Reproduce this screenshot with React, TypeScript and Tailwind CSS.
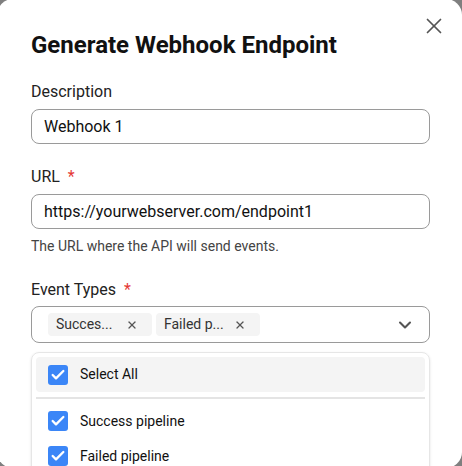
import { X, ChevronDown, Check } from 'lucide-react'

const font = { fontFamily: 'Roboto, "Liberation Sans", sans-serif' }

function Checkbox() {
  return (
    <span className="flex h-5 w-5 shrink-0 items-center justify-center rounded-[3px] bg-[#3b86f7]">
      <Check className="h-4 w-4 text-white" strokeWidth={3.5} />
    </span>
  )
}

function Chip({ label }: { label: string }) {
  return (
    <span className="flex h-[23px] w-[104px] items-center justify-between rounded-[4px] bg-[#f4f4f4] pl-2 pr-[14px] text-[14px] text-[#333]">
      <span>{label}</span>
      <X className="h-3 w-3 text-[#555]" strokeWidth={2.5} />
    </span>
  )
}

export default function App() {
  return (
    <div className="h-[466px] w-[462px] overflow-hidden bg-[#7f7f7f]" style={font}>
      <div className="-ml-[3px] -mt-[1px] h-[469px] w-[465px] rounded-2xl bg-white pl-[34px] pr-[32px]">
        <div className="relative pt-[31px]">
          <h1 className="text-[24px] font-bold leading-[30px] text-[#111]">Generate Webhook Endpoint</h1>
          <X className="absolute right-[-17px] top-[14px] h-[26px] w-[26px] text-[#555]" strokeWidth={1.6} />
        </div>

        <div className="mt-[22px]">
          <label className="block text-[16px] leading-[20px] text-[#222]">Description</label>
          <div className="mt-[7px] flex h-[35px] items-center rounded-lg border border-[#9a9a9a] px-3 text-[16px] text-[#111]">
            Webhook 1
          </div>
        </div>

        <div className="mt-[23px]">
          <label className="block text-[16px] leading-[20px] text-[#222]">
            URL <span className="ml-1 text-[#e53935]">*</span>
          </label>
          <div className="mt-[7px] flex h-[35px] items-center rounded-lg border border-[#9a9a9a] px-3 text-[16px] text-[#111]">
            https://yourwebserver.com/endpoint1
          </div>
          <p className="mt-[9px] text-[14px] leading-[16px] text-[#444]">The URL where the API will send events.</p>
        </div>

        <div className="mt-[26px]">
          <label className="block text-[16px] leading-[20px] text-[#222]">
            Event Types <span className="ml-1 text-[#e53935]">*</span>
          </label>
          <div className="mt-[6px] flex h-[37px] items-center gap-[4px] rounded-lg border border-[#9a9a9a] pl-4 pr-[14px]">
            <Chip label="Succes..." />
            <Chip label="Failed p..." />
            <ChevronDown className="ml-auto h-[20px] w-[20px] text-[#555]" strokeWidth={2.5} />
          </div>

          <div className="mt-[9px] h-[140px] rounded-lg border border-[#e6e6e6] px-[4px] pt-[4px] shadow-sm">
            <div className="flex h-[35px] items-center gap-3 rounded-[4px] bg-[#f4f4f4] pl-3 text-[15px] text-[#111]">
              <Checkbox />
              <span className="text-[14px]">Select All</span>
            </div>
            <div className="mt-[5px] h-[2px] bg-[#e4e4e4]" />
            <div className="flex h-[39px] items-center gap-3 pl-3 pt-[5px] text-[14px] text-[#111]">
              <Checkbox />
              Success pipeline
            </div>
            <div className="flex h-[36px] items-center gap-3 pl-3 text-[14px] text-[#111]">
              <Checkbox />
              Failed pipeline
            </div>
          </div>
        </div>
      </div>
    </div>
  )
}
